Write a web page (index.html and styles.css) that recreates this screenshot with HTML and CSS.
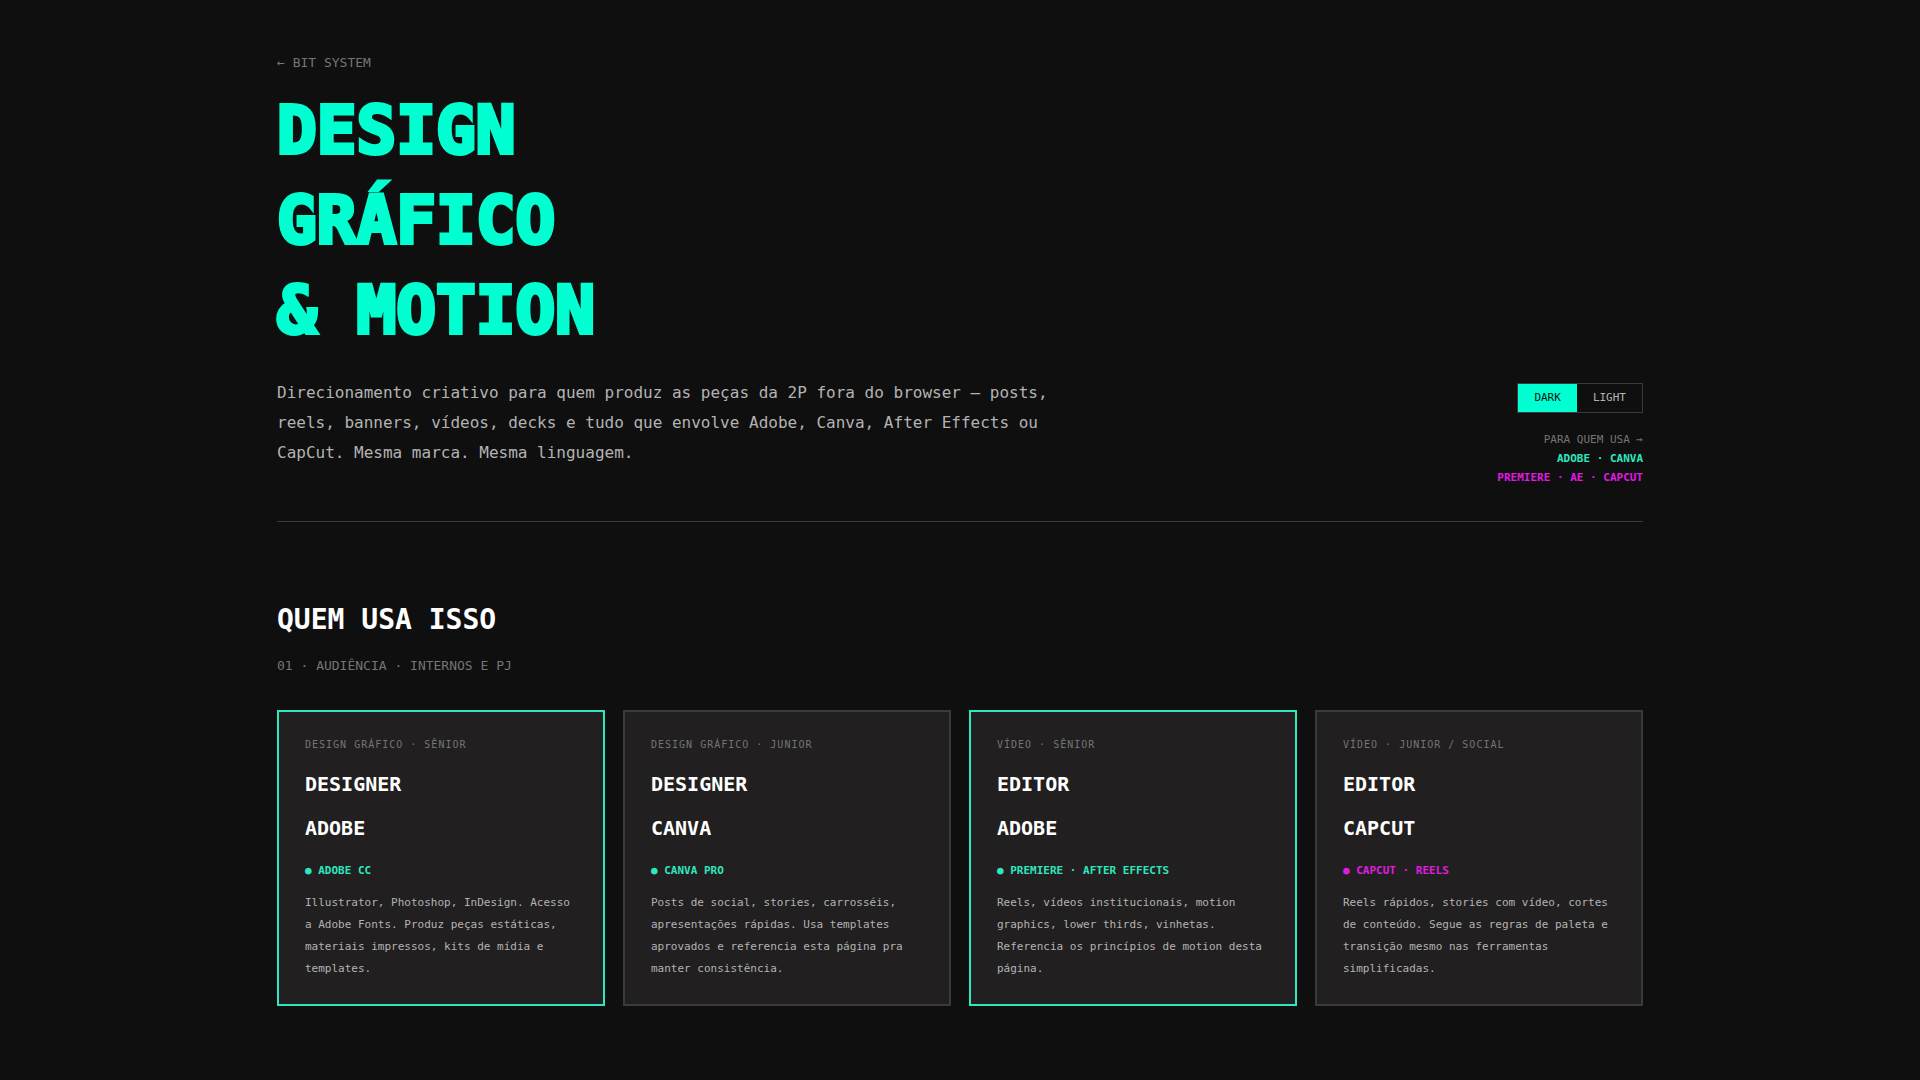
FILE: index.html
```html
<!DOCTYPE html>
<html lang="pt-BR">
<head>
    <meta charset="UTF-8">
    <meta name="viewport" content="width=device-width, initial-scale=1.0">
    <title>Design Gráfico &amp; Motion - Bit System</title>
    <link rel="stylesheet" href="styles.css">
</head>
<body>
    <div class="container">
        <header class="header">
            <a href="#" class="back">← BIT SYSTEM</a>
            <h1>DESIGN<br>GRÁFICO<br>&amp; MOTION</h1>
            <div class="header-row">
                <p class="lede">Direcionamento criativo para quem produz as peças da 2P fora do browser — posts, reels, banners, vídeos, decks e tudo que envolve Adobe, Canva, After Effects ou CapCut. Mesma marca. Mesma linguagem.</p>
                <div class="meta">
                    <div class="theme-toggle">
                        <button type="button" class="active">DARK</button>
                        <button type="button">LIGHT</button>
                    </div>
                    <p>PARA QUEM USA →</p>
                    <p class="tools green">ADOBE · CANVA</p>
                    <p class="tools magenta">PREMIERE · AE · CAPCUT</p>
                </div>
            </div>
        </header>

        <section>
            <h2>QUEM USA ISSO</h2>
            <p class="section-sub">01 · AUDIÊNCIA · INTERNOS E PJ</p>

            <div class="cards">
                <article class="card featured">
                    <p class="role">DESIGN GRÁFICO · SÊNIOR</p>
                    <h3>DESIGNER<br>ADOBE</h3>
                    <p class="tools green">● ADOBE CC</p>
                    <p class="desc">Illustrator, Photoshop, InDesign. Acesso a Adobe Fonts. Produz peças estáticas, materiais impressos, kits de mídia e templates.</p>
                </article>
                <article class="card">
                    <p class="role">DESIGN GRÁFICO · JUNIOR</p>
                    <h3>DESIGNER<br>CANVA</h3>
                    <p class="tools green">● CANVA PRO</p>
                    <p class="desc">Posts de social, stories, carrosséis, apresentações rápidas. Usa templates aprovados e referencia esta página pra manter consistência.</p>
                </article>
                <article class="card featured">
                    <p class="role">VÍDEO · SÊNIOR</p>
                    <h3>EDITOR<br>ADOBE</h3>
                    <p class="tools green">● PREMIERE · AFTER EFFECTS</p>
                    <p class="desc">Reels, vídeos institucionais, motion graphics, lower thirds, vinhetas. Referencia os princípios de motion desta página.</p>
                </article>
                <article class="card">
                    <p class="role">VÍDEO · JUNIOR / SOCIAL</p>
                    <h3>EDITOR<br>CAPCUT</h3>
                    <p class="tools magenta">● CAPCUT · REELS</p>
                    <p class="desc">Reels rápidos, stories com vídeo, cortes de conteúdo. Segue as regras de paleta e transição mesmo nas ferramentas simplificadas.</p>
                </article>
            </div>
        </section>
    </div>
</body>
</html>
```

FILE: styles.css
```css
:root {
    --bg: #0f0f0f;
    --card: #221f20;
    --line: #3a3a3a;
    --green: #00ffd1;
    --green-soft: #2ee6bf;
    --magenta: #e01be0;
    --text: #b3b3b3;
    --muted: #757575;
}
* {
    box-sizing: border-box;
    margin: 0;
    padding: 0;
}
body {
    background: var(--bg);
    color: var(--text);
    font-family: 'DejaVu Sans Mono', monospace;
    font-size: 11px;
    line-height: 22px;
}
.container {
    max-width: 1446px;
    margin: 0 auto;
    padding: 52px 40px 74px;
}
.header {
    padding-bottom: 34px;
    border-bottom: 1px solid var(--line);
    margin-bottom: 76px;
}
.back {
    display: block;
    color: var(--muted);
    font-size: 13px;
    text-decoration: none;
    margin-bottom: 12px;
}
h1 {
    color: var(--green);
    font-size: 66px;
    line-height: 90px;
    -webkit-text-stroke: 4px var(--green);
    margin-bottom: 22px;
}
.header-row {
    display: flex;
    justify-content: space-between;
    align-items: flex-start;
    gap: 40px;
}
.lede {
    max-width: 780px;
    font-size: 16px;
    line-height: 30px;
}
.meta {
    text-align: right;
    line-height: 19px;
    color: var(--muted);
    padding-top: 5px;
}
.theme-toggle {
    display: inline-flex;
    border: 1px solid var(--line);
    margin-bottom: 17px;
}
.theme-toggle button {
    background: transparent;
    border: none;
    color: var(--text);
    font-family: inherit;
    font-size: 11px;
    line-height: 28px;
    padding: 0 16px;
    cursor: pointer;
}
.theme-toggle .active {
    background: var(--green);
    color: var(--bg);
}
.tools {
    font-weight: bold;
}
.green {
    color: var(--green-soft);
}
.magenta {
    color: var(--magenta);
}
h2 {
    color: #fff;
    font-size: 28px;
    line-height: 44px;
    margin-bottom: 13px;
}
.section-sub {
    color: var(--muted);
    font-size: 13px;
    margin-bottom: 33px;
}
.cards {
    display: grid;
    grid-template-columns: repeat(4, 1fr);
    gap: 18px;
}
.card {
    background: var(--card);
    border: 2px solid var(--line);
    padding: 22px 26px 24px;
}
.card.featured {
    border-color: var(--green-soft);
}
.role {
    color: var(--muted);
    font-size: 10px;
    letter-spacing: 1px;
    margin-bottom: 6px;
}
h3 {
    color: #fff;
    font-size: 20px;
    line-height: 44px;
    margin-bottom: 10px;
}
.desc {
    margin-top: 10px;
}

@media (max-width: 1100px) {
    .cards {
        grid-template-columns: repeat(2, 1fr);
    }
    .header-row {
        flex-wrap: wrap;
    }
}
```
